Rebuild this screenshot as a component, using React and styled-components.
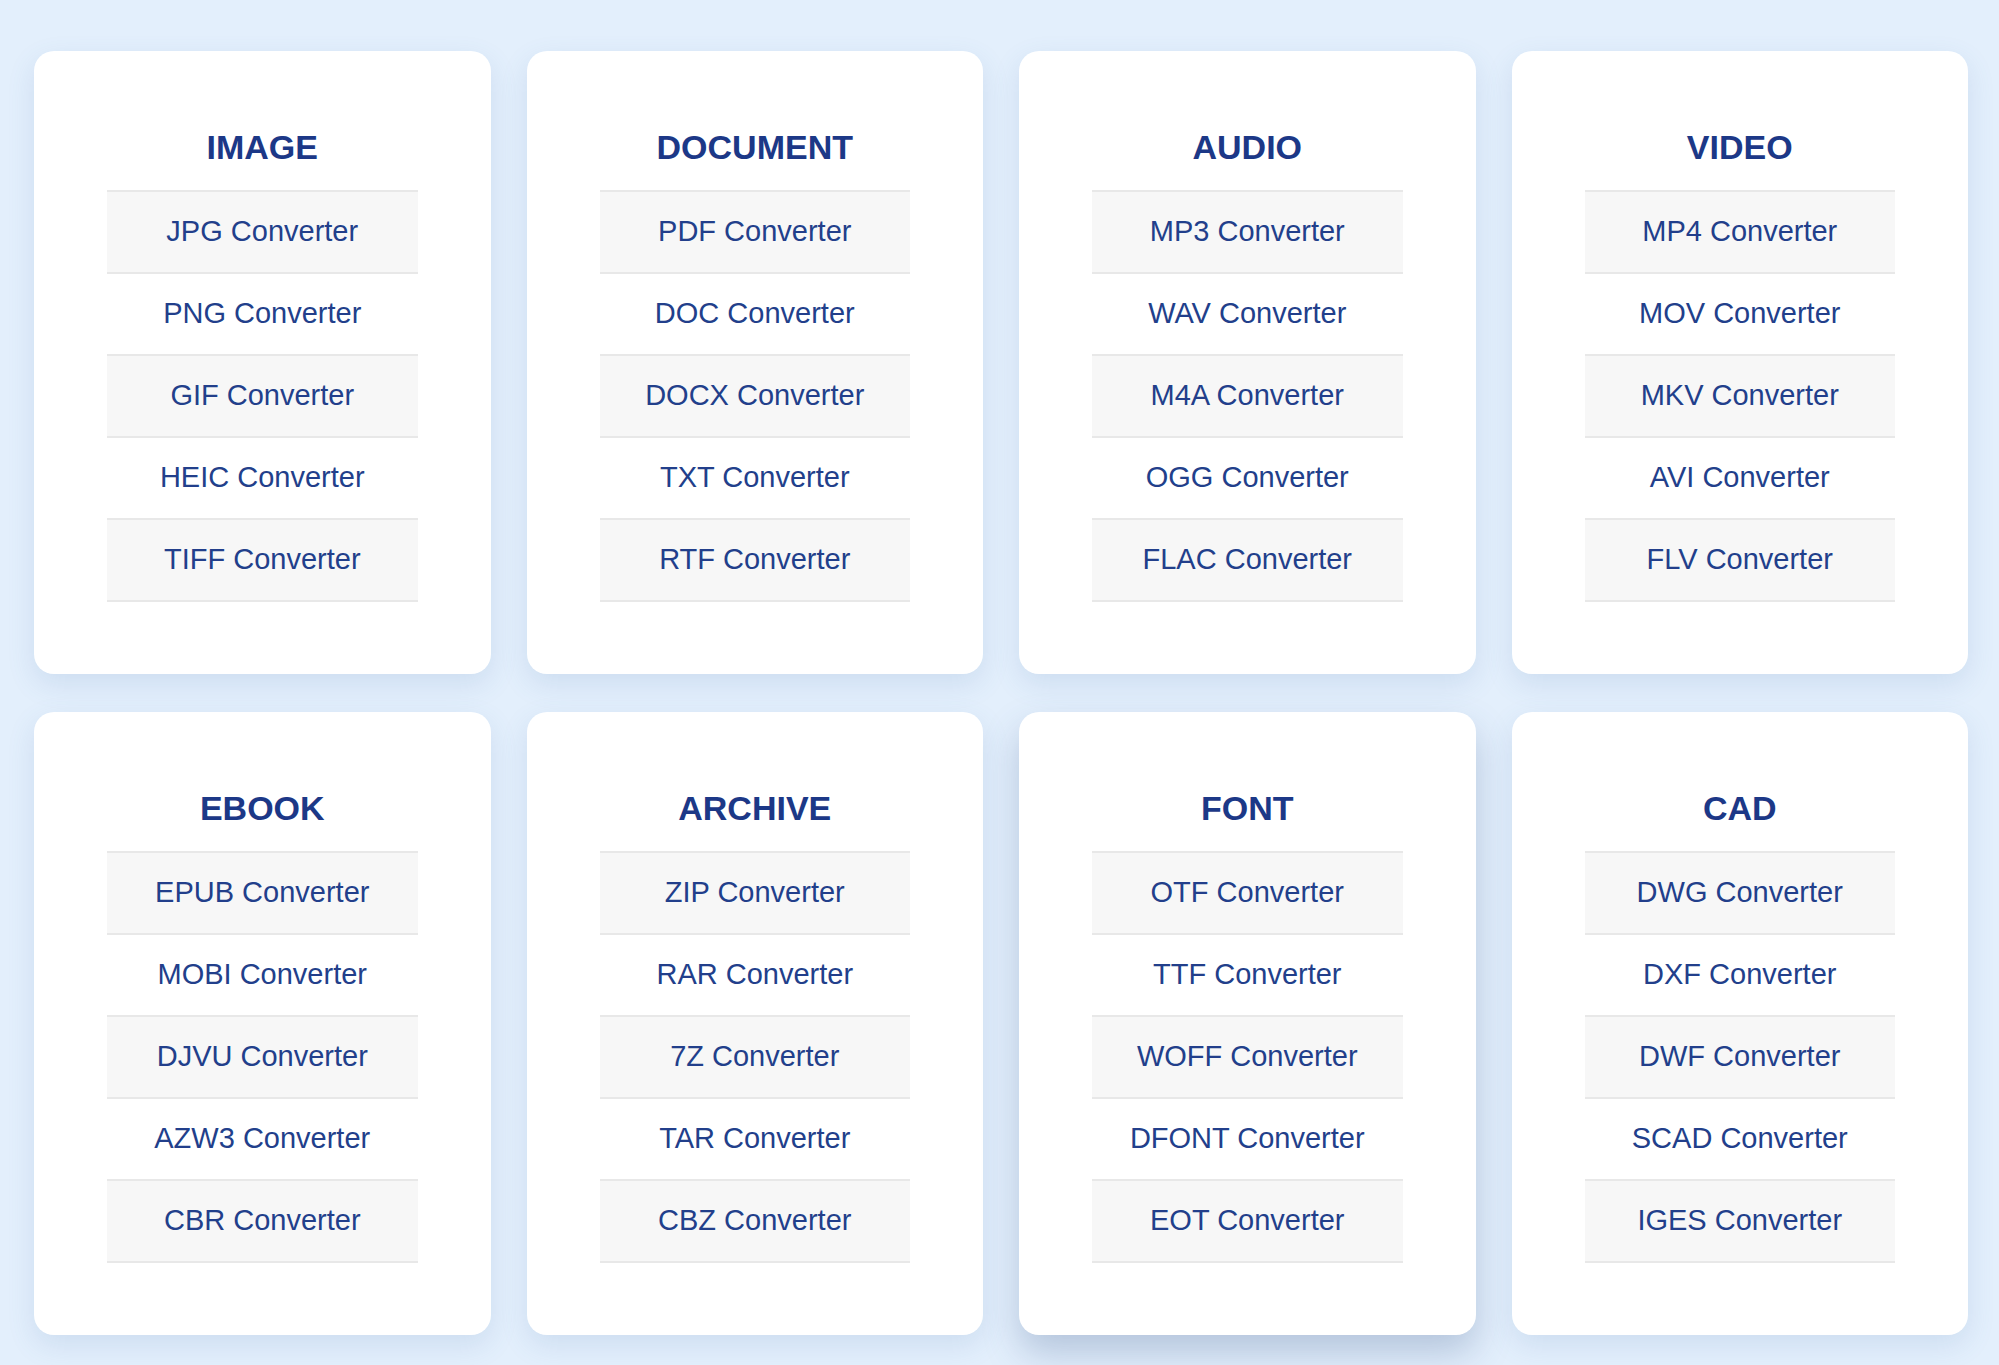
import styled, { createGlobalStyle } from "styled-components";

const GlobalStyle = createGlobalStyle`
  html, body {
    margin: 0;
    padding: 0;
    background: #e3effc;
  }
  body {
    font-family: "Liberation Sans", Arial, Helvetica, sans-serif;
  }
`;

const Page = styled.div`
  min-height: 1365px;
  box-sizing: border-box;
  padding: 51px 31px 30px 34px;
  background: #e3effc;
`;

const Grid = styled.div`
  display: grid;
  grid-template-columns: repeat(4, 1fr);
  column-gap: 36px;
  row-gap: 38px;
`;

const Card = styled.div`
  background: #ffffff;
  border-radius: 20px;
  padding: 77px 73px 72px;
  box-shadow: ${(p) =>
    p.$raised
      ? "0 18px 36px rgba(60, 90, 140, 0.28)"
      : "0 10px 28px rgba(70, 110, 170, 0.14)"};
`;

const Title = styled.h2`
  margin: 0 0 24px;
  font-size: 34px;
  line-height: 38px;
  font-weight: 700;
  text-align: center;
  color: #1c3887;
`;

const List = styled.ul`
  list-style: none;
  margin: 0;
  padding: 0;
  border-top: 2px solid #e8e8e8;
`;

const Item = styled.li`
  height: 82px;
  box-sizing: border-box;
  padding-bottom: 2px;
  display: flex;
  align-items: center;
  justify-content: center;
  border-bottom: 2px solid #e8e8e8;
  background: ${(p) => (p.$shaded ? "#f7f7f7" : "#ffffff")};
  font-size: 29px;
  color: #223f8b;
`;

const groups = [
  { title: "IMAGE", items: ["JPG", "PNG", "GIF", "HEIC", "TIFF"] },
  { title: "DOCUMENT", items: ["PDF", "DOC", "DOCX", "TXT", "RTF"] },
  { title: "AUDIO", items: ["MP3", "WAV", "M4A", "OGG", "FLAC"] },
  { title: "VIDEO", items: ["MP4", "MOV", "MKV", "AVI", "FLV"] },
  { title: "EBOOK", items: ["EPUB", "MOBI", "DJVU", "AZW3", "CBR"] },
  { title: "ARCHIVE", items: ["ZIP", "RAR", "7Z", "TAR", "CBZ"] },
  { title: "FONT", items: ["OTF", "TTF", "WOFF", "DFONT", "EOT"], raised: true },
  { title: "CAD", items: ["DWG", "DXF", "DWF", "SCAD", "IGES"] },
];

export default function App() {
  return (
    <>
      <GlobalStyle />
      <Page>
        <Grid>
          {groups.map((g) => (
            <Card key={g.title} $raised={g.raised}>
              <Title>{g.title}</Title>
              <List>
                {g.items.map((name, i) => (
                  <Item key={name} $shaded={i % 2 === 0}>
                    {name} Converter
                  </Item>
                ))}
              </List>
            </Card>
          ))}
        </Grid>
      </Page>
    </>
  );
}
